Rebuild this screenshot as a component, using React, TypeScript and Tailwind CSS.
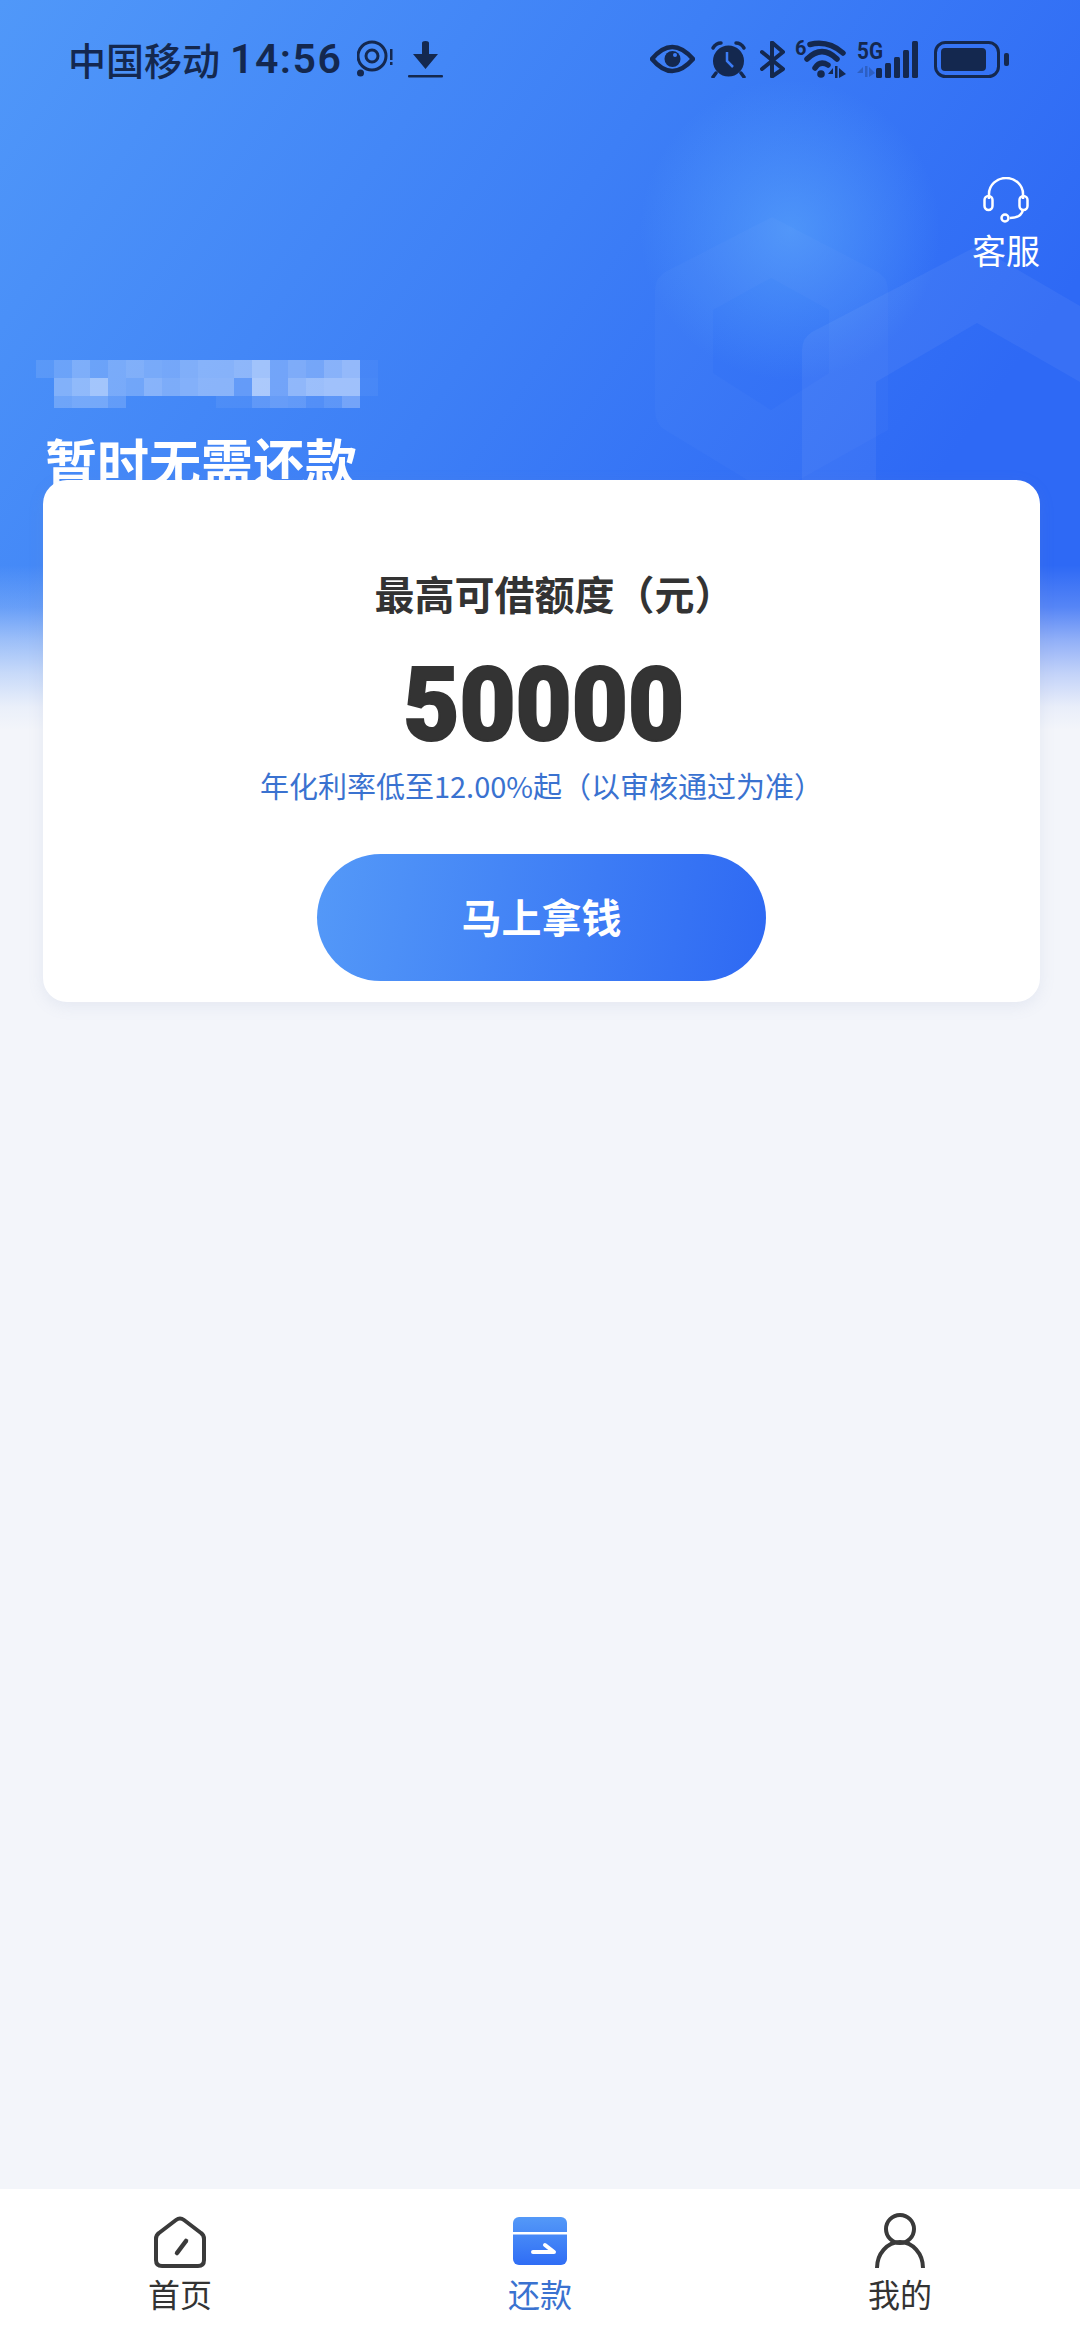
const DARK = '#14284f';

// mosaic over the account name, one row per 18px band
const mosaic = [
  [0.1, 0.2, 0.3, 0.2, 0.28, 0.32, 0.28, 0.26, 0.32, 0.36, 0.36, 0.4, 0.5, 0.26, 0.32, 0.28, 0.38, 0.44, 0.04],
  [0, 0.32, 0.4, 0.5, 0.28, 0.24, 0.36, 0.3, 0.34, 0.38, 0.38, 0.18, 0.56, 0.26, 0.42, 0.48, 0.5, 0.5, 0.05],
  [0, 0.22, 0.26, 0.26, 0.16, 0, 0, 0, 0, 0, 0.06, 0.06, 0.16, 0.2, 0.18, 0.1, 0.16, 0.28, 0],
];

function StatusIcons() {
  return (
    <div className="flex items-center">
      {/* eye */}
      <svg width="45" height="30" viewBox="0 0 45 30">
        <path d="M2 15 Q22 -9 43 15 Q22 39 2 15 Z" fill="none" stroke={DARK} strokeWidth="4.5" strokeLinejoin="round" />
        <circle cx="22.5" cy="15" r="8" fill={DARK} />
        <circle cx="25" cy="11" r="2" fill="#3c7cf6" />
      </svg>
      {/* alarm */}
      <svg width="37" height="37" viewBox="0 0 37 37" className="ml-[15px]">
        <circle cx="18.5" cy="20" r="15.5" fill={DARK} />
        <path d="M3 7 Q6 2 11 2 M26 2 Q31 2 34 7" fill="none" stroke={DARK} strokeWidth="3.5" strokeLinecap="round" />
        <path d="M6 32 L3 36 M31 32 L34 36" stroke={DARK} strokeWidth="3.5" strokeLinecap="round" />
        <path d="M17 11 V20 L23 26" fill="none" stroke="#3c7cf6" strokeWidth="2.5" />
      </svg>
      {/* bluetooth */}
      <svg width="25" height="37" viewBox="0 0 25 37" className="ml-[13px]">
        <path d="M2 11 L23 28 L12 35.5 V1.5 L23 11 L2 28" fill="none" stroke={DARK} strokeWidth="4" strokeLinejoin="round" strokeLinecap="round" />
      </svg>
      {/* wifi 6 */}
      <svg width="51" height="38" viewBox="0 0 51 38" className="ml-[10px] overflow-visible">
        <text x="0" y="15" fontSize="20" fontWeight="700" fontFamily="Roboto, sans-serif" fill={DARK}>6</text>
        <path d="M15 4.5 Q33 0 48 13" fill="none" stroke={DARK} strokeWidth="5.5" strokeLinecap="round" />
        <path d="M12 19 Q27 4 42 19" fill="none" stroke={DARK} strokeWidth="5.5" strokeLinecap="round" />
        <path d="M20 28 Q25 20 33 25" fill="none" stroke={DARK} strokeWidth="5.5" strokeLinecap="round" />
        <circle cx="26" cy="34" r="3.8" fill={DARK} />
        <path d="M38 38 V28 L33 34 H38 Z M40 26 H42.5 V38 H40 Z M44 28 L51 34 L44 38 Z" fill={DARK} />
      </svg>
      {/* 5G signal */}
      <svg width="62" height="37" viewBox="0 0 62 37" className="ml-[11px] overflow-visible">
        <text x="0" y="18" fontSize="23" fontWeight="700" fontFamily="Roboto, sans-serif" fill={DARK} textLength="26" lengthAdjust="spacingAndGlyphs">5G</text>
        <path d="M6 36 V26 L0 32 H6 Z M8 25 H10.5 V36 H8 Z M12 26 L18 32 L12 36 Z" fill={DARK} opacity="0.3" />
        <rect x="19" y="27" width="6" height="10" rx="1.5" fill={DARK} />
        <rect x="28" y="22" width="6" height="15" rx="1.5" fill={DARK} />
        <rect x="37" y="16" width="6" height="21" rx="1.5" fill={DARK} />
        <rect x="46" y="9" width="6" height="28" rx="1.5" fill={DARK} />
        <rect x="55" y="0" width="6" height="37" rx="1.5" fill={DARK} />
      </svg>
      {/* battery */}
      <svg width="75" height="37" viewBox="0 0 75 37" className="ml-[15px]">
        <rect x="1.5" y="1.5" width="63" height="34" rx="10" fill="none" stroke={DARK} strokeWidth="3" />
        <rect x="7" y="7" width="45" height="23" rx="4" fill={DARK} />
        <rect x="70" y="12" width="5" height="13" rx="2" fill={DARK} />
      </svg>
    </div>
  );
}

function StatusBar() {
  return (
    <div className="flex h-[118px] items-center justify-between pr-[71px] pl-[68px]">
      <div className="flex items-center text-[38px] leading-none font-medium text-[#14284f]">
        <span className="w-[162px]">中国移动</span>
        <span className="w-[127px] font-['Roboto',sans-serif] text-[41px] font-semibold tracking-[1.5px]">14:56</span>
        <svg width="36" height="38" viewBox="0 0 36 38">
          <circle cx="15" cy="16" r="14" fill="none" stroke={DARK} strokeWidth="3" />
          <circle cx="15" cy="16" r="6" fill="none" stroke={DARK} strokeWidth="3" />
          <circle cx="3.5" cy="33" r="3.5" fill={DARK} />
          <rect x="33" y="9" width="2.5" height="11" fill={DARK} />
          <rect x="33" y="22" width="2.5" height="3" fill={DARK} />
        </svg>
        <svg width="35" height="38" viewBox="0 0 35 38" className="ml-[15px]">
          <path d="M14 3 Q14 1 17.5 1 Q21 1 21 3 V14 H30 L17.5 29 L5 14 H14 Z" fill={DARK} />
          <rect x="0" y="35" width="35" height="2.5" rx="1" fill={DARK} />
        </svg>
      </div>
      <StatusIcons />
    </div>
  );
}

function Hexagons() {
  return (
    <svg width="580" height="480" viewBox="500 0 580 480" className="absolute top-0 right-0">
      <defs>
        <radialGradient id="glow" cx="0.5" cy="0.5" r="0.5">
          <stop offset="0" stopColor="#5aa5fb" stopOpacity="0.65" />
          <stop offset="1" stopColor="#5aa5fb" stopOpacity="0" />
        </radialGradient>
      </defs>
      <circle cx="790" cy="230" r="150" fill="url(#glow)" />
      <path
        fillRule="evenodd"
        d="M772 217 L878 272 Q888 278 888 290 V430 L772 495 L665 430 Q655 424 655 410 V290 Q655 278 665 272 Z M771 278 L713 310 V373 L771 410 L829 373 V310 Z"
        fill="#ffffff"
        fillOpacity="0.025"
      />
      <path
        fillRule="evenodd"
        d="M977 246 L1080 306 V480 H802 V350 Q802 338 812 332 Z M977 323 L876 382 V480 H1080 V382 Z"
        fill="#ffffff"
        fillOpacity="0.05"
      />
    </svg>
  );
}

function Card() {
  return (
    <div className="relative z-10 ml-[43px] flex w-[997px] flex-col items-center rounded-[24px] bg-white pt-[89px] pb-[21px] shadow-[0_4px_16px_rgba(120,140,180,0.12)]">
      <div className="pl-[26px] text-[40px] leading-[48px] font-bold text-[#333333]">最高可借额度（元）</div>
      <div className="mt-[38px] scale-x-[0.95] pl-[5px] font-['Roboto',sans-serif] text-[102px] leading-[100px] font-black text-[#333333] [-webkit-text-stroke:2px_#333333]">50000</div>
      <div className="mt-[10px] text-[29px] leading-[40px] text-[#3a72d0]">年化利率低至12.00%起（以审核通过为准）</div>
      <button className="mt-[49px] flex h-[127px] w-[449px] items-center justify-center rounded-full bg-[linear-gradient(100deg,#5499f8,#2e69f3)] pb-[3px] text-[40px] font-bold text-white">
        马上拿钱
      </button>
    </div>
  );
}

function TabBar() {
  return (
    <nav className="grid h-[151px] grid-cols-3 bg-white pt-[24px]">
      <div className="flex flex-col items-center">
        <div className="flex h-[55px] items-end">
          <svg width="54" height="52" viewBox="0 0 54 52">
            <path d="M3 23 Q3 19 6 17 L23 4 Q27 1 31 4 L48 17 Q51 19 51 23 V44 Q51 50 45 50 H9 Q3 50 3 44 Z" fill="none" stroke="#3a3a3a" strokeWidth="4" strokeLinejoin="round" />
            <path d="M24 37 L33 25" stroke="#3a3a3a" strokeWidth="4.5" strokeLinecap="round" />
          </svg>
        </div>
        <span className="mt-[5px] text-[32px] leading-[40px] text-[#333333]">首页</span>
      </div>
      <div className="flex flex-col items-center">
        <div className="flex h-[55px] items-end pb-[3px]">
          <svg width="54" height="48" viewBox="0 0 54 48">
            <defs>
              <linearGradient id="repay" x1="0" y1="0" x2="0" y2="1">
                <stop offset="0" stopColor="#5499f8" />
                <stop offset="1" stopColor="#2f6df5" />
              </linearGradient>
            </defs>
            <rect width="54" height="48" rx="6" fill="url(#repay)" />
            <rect y="15" width="54" height="2.5" fill="#ffffff" />
            <path d="M20 35 H41 L32 28" fill="none" stroke="#ffffff" strokeWidth="4" strokeLinecap="round" strokeLinejoin="round" />
          </svg>
        </div>
        <span className="mt-[5px] text-[32px] leading-[40px] text-[#3a72d0]">还款</span>
      </div>
      <div className="flex flex-col items-center">
        <div className="flex h-[55px] items-end">
          <svg width="50" height="55" viewBox="0 0 50 55">
            <circle cx="25" cy="16" r="14" fill="none" stroke="#3a3a3a" strokeWidth="4" />
            <path d="M2 55 A23 26 0 0 1 48 55" fill="none" stroke="#3a3a3a" strokeWidth="4" />
          </svg>
        </div>
        <span className="mt-[5px] text-[32px] leading-[40px] text-[#333333]">我的</span>
      </div>
    </nav>
  );
}

export default function App() {
  return (
    <div className="flex h-[2340px] w-[1080px] flex-col overflow-hidden bg-[#f3f5fa] font-['Noto_Sans_CJK_SC','Noto_Sans',sans-serif]">
      <main className="relative flex-1 bg-[linear-gradient(180deg,rgba(243,245,250,0)_565px,rgba(243,245,250,0.2)_607px,rgba(243,245,250,0.5)_640px,rgba(243,245,250,0.75)_673px,rgba(243,245,250,0.95)_707px,rgba(243,245,250,1)_730px),linear-gradient(125deg,#5098f9_0%,#3d7ff6_45%,#2e69f5_80%)] bg-[length:100%_100%,100%_730px] bg-no-repeat">
        <Hexagons />
        <div className="relative">
          <StatusBar />
          {/* customer service */}
          <div className="mt-[59px] mr-[40px] ml-auto flex h-[183px] w-[68px] flex-col items-center">
            <svg width="46" height="46" viewBox="0 0 46 46">
              <path d="M6 22 V17 A17 16 0 0 1 40 17 V22" fill="none" stroke="#ffffff" strokeWidth="2.5" />
              <rect x="1.5" y="19" width="8" height="14" rx="4" fill="none" stroke="#ffffff" strokeWidth="2.5" />
              <rect x="36.5" y="19" width="8" height="14" rx="4" fill="none" stroke="#ffffff" strokeWidth="2.5" />
              <path d="M40 33 Q38 41 27 41" fill="none" stroke="#ffffff" strokeWidth="2.5" />
              <circle cx="22" cy="41" r="3.5" fill="none" stroke="#ffffff" strokeWidth="2.5" />
            </svg>
            <span className="mt-[7px] text-[34px] leading-[40px] whitespace-nowrap text-white">客服</span>
          </div>
          {/* blurred name */}
          <div className="ml-[36px] grid h-[73px] w-fit grid-cols-[repeat(19,18px)] grid-rows-[18px_18px_12px]">
            {mosaic.flat().map((a, i) => (
              <div key={i} className="bg-white" style={{ opacity: a }} />
            ))}
          </div>
          <div className="ml-[45px] h-[47px] text-[52px] leading-[56px] font-bold text-white">暂时无需还款</div>
          <Card />
        </div>
      </main>
      <TabBar />
    </div>
  );
}
